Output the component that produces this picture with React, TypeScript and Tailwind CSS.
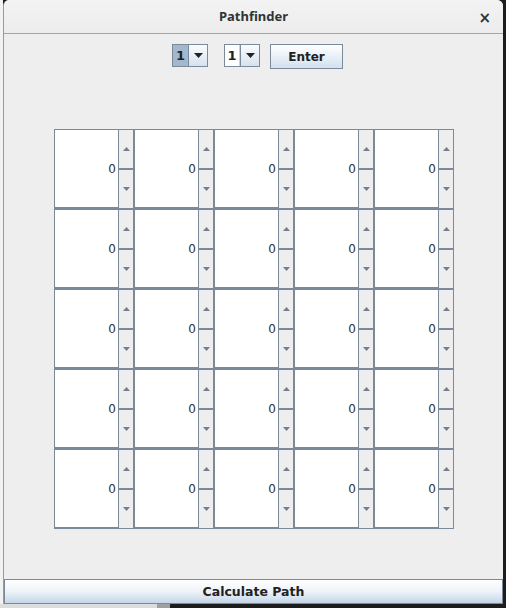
import React from "react";

const rows = [0, 1, 2, 3, 4];
const cols = [0, 1, 2, 3, 4];

function Arrow({ up }: { up?: boolean }) {
  return (
    <svg width="7" height="4" viewBox="0 0 7 4" className="block">
      {up ? <path d="M0 4 L3.5 0 L7 4 Z" fill="#6f7f90" /> : <path d="M0 0 L3.5 4 L7 0 Z" fill="#6f7f90" />}
    </svg>
  );
}

function SpinCell() {
  return (
    <div className="flex h-[80px] w-[80px] border border-[#7b8a99] bg-white">
      <div className="flex flex-1 items-center justify-end border-b border-[#7b8a99] pr-[2px] text-[12px] text-[#333]">
        0
      </div>
      <div className="flex w-[15px] flex-col border-l border-[#7b8a99] bg-[#eeeeee]">
        <div className="flex flex-1 items-center justify-center">
          <Arrow up />
        </div>
        <div className="h-[2px] bg-[#7b8a99]" />
        <div className="flex flex-1 items-center justify-center">
          <Arrow />
        </div>
      </div>
    </div>
  );
}

function Combo({ selected }: { selected?: boolean }) {
  return (
    <div className="flex h-[23px] w-[36px] border border-[#7b8a99] bg-white">
      <div
        className={
          selected
            ? "flex w-[15px] items-center justify-center bg-[#a3b8cc] text-[13px] font-bold text-[#222]"
            : "flex w-[15px] items-center justify-center border-r border-[#c5d3e0] bg-white text-[13px] font-bold text-[#222]"
        }
      >
        1
      </div>
      <div className="flex flex-1 items-center justify-center border-l border-[#7b8a99] bg-gradient-to-b from-[#fbfcfe] to-[#d6e2ef]">
        <svg width="9" height="5" viewBox="0 0 9 5">
          <path d="M0 0 L4.5 5 L9 0 Z" fill="#222" />
        </svg>
      </div>
    </div>
  );
}

export default function App() {
  return (
    <div
      className="flex h-[608px] w-[506px] flex-col overflow-hidden bg-[#1c1c1c]"
      style={{ fontFamily: '"DejaVu Sans", sans-serif' }}
    >
      <div className="flex h-[604px]">
        <div className="w-[3px] bg-[#f2f2f2]" />
        <div className="flex w-[500px] flex-col overflow-hidden rounded-t-[6px] border-l border-[#9a9a9a] bg-[#eeeeee]">
          {/* Title bar */}
          <div className="relative flex h-[34px] shrink-0 items-center justify-center border-b border-[#a5a5a5] bg-gradient-to-b from-[#f3f3f3] to-[#ececec]">
            <span className="font-['Noto_Sans',sans-serif] text-[13px] font-bold text-[#2e3436]">Pathfinder</span>
            <span className="absolute right-[12px] top-[7px] text-[15px] font-bold text-[#2e3436]">×</span>
          </div>

          {/* Content */}
          <div className="flex flex-1 flex-col">
            <div className="ml-[168px] flex items-start pt-[10px]">
              <Combo selected />
              <div className="w-[16px]" />
              <Combo />
              <div className="w-[10px]" />
              <button className="flex h-[25px] w-[73px] items-center justify-center border border-[#7b8a99] bg-gradient-to-b from-[#ffffff] to-[#d3e0ee] text-[12px] font-bold text-[#222]">
                Enter
              </button>
            </div>

            <div className="ml-[50px] mt-[60px] flex flex-col">
              {rows.map((r) => (
                <div key={r} className="flex">
                  {cols.map((c) => (
                    <SpinCell key={c} />
                  ))}
                </div>
              ))}
            </div>
          </div>

          {/* Bottom button */}
          <button className="flex h-[25px] shrink-0 items-center justify-center border border-[#7b8a99] bg-gradient-to-b from-[#ffffff] via-[#eef3f9] to-[#c4d6e8] pt-[1px] text-[12.5px] font-bold text-[#222]">
            Calculate Path
          </button>
        </div>
        <div className="w-[3px] bg-[#1c1c1c]" />
      </div>
      <div className="flex h-[4px]">
        <div className="w-[157px] bg-[#dcdcdc]" />
        <div className="w-[13px] bg-[#a0a0a0]" />
        <div className="flex-1 bg-[#1c1c1c]" />
      </div>
    </div>
  );
}
